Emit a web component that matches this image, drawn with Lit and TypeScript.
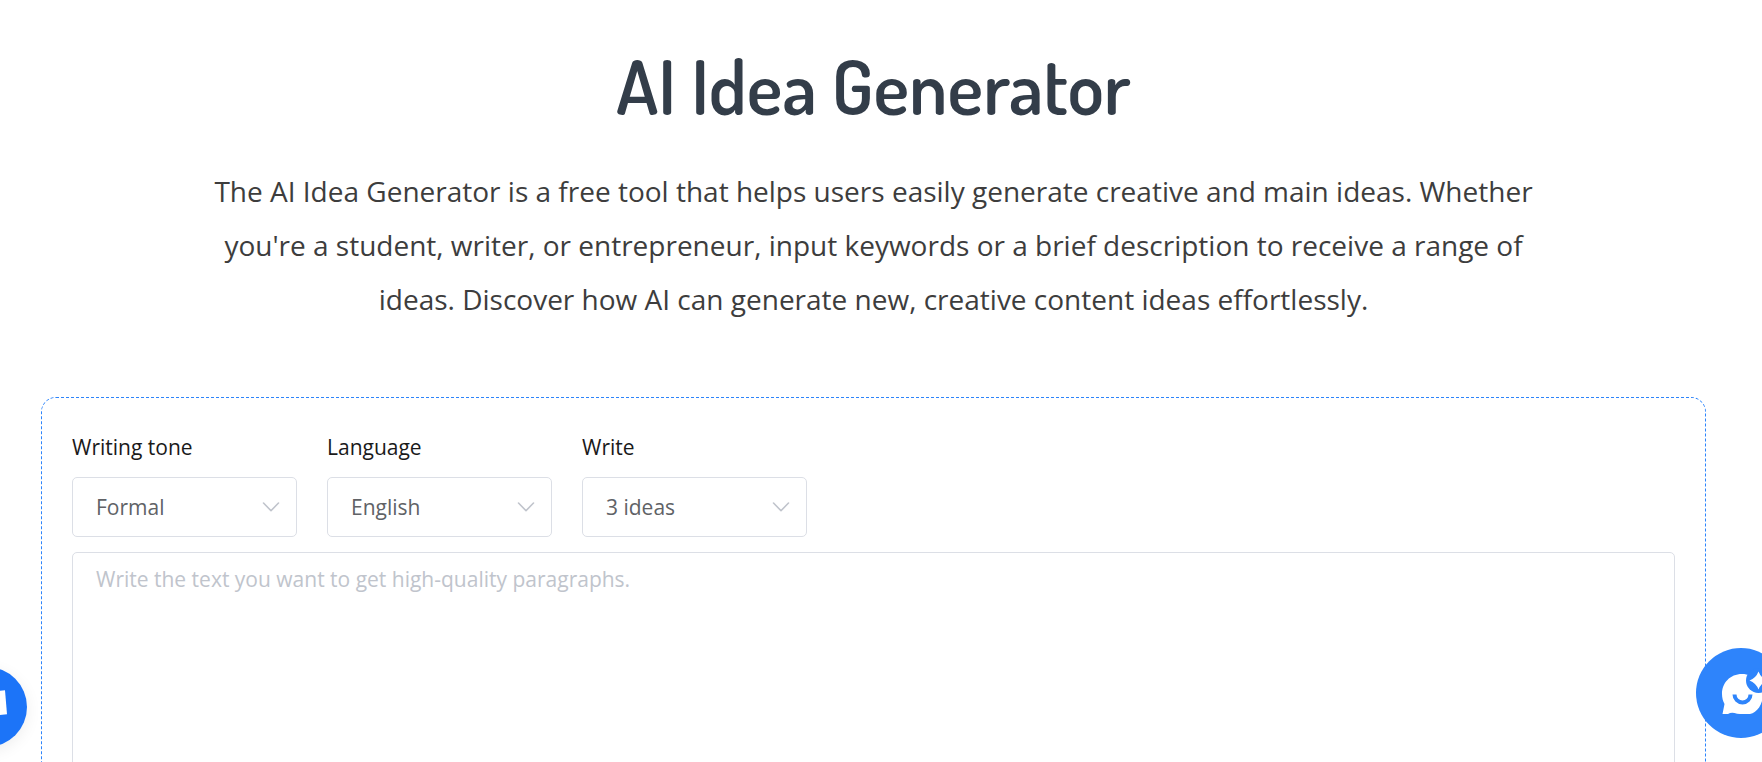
import { LitElement, html, css } from "lit";
import { customElement, property } from "lit/decorators.js";

@customElement("option-select")
class OptionSelect extends LitElement {
  @property() label = "";
  @property({ attribute: false }) options: string[] = [];

  static styles = css`
    :host {
      display: block;
      flex: 0 1 225px;
    }
    .label {
      display: block;
      margin-bottom: 14px;
      color: #1a1a1a;
      font-size: 21px;
      line-height: 32px;
    }
    .field {
      display: grid;
      align-items: center;
    }
    .select {
      grid-area: 1 / 1;
      box-sizing: border-box;
      width: 100%;
      height: 60px;
      margin: 0;
      padding: 0 48px 0 23px;
      appearance: none;
      border: 1px solid #dcdfe6;
      border-radius: 5px;
      background: #fff;
      color: #606266;
      font: inherit;
      font-size: 21px;
    }
    .chevron {
      grid-area: 1 / 1;
      justify-self: end;
      margin-right: 17px;
      pointer-events: none;
    }
  `;

  render() {
    return html`
      <label class="label" for="choice">${this.label}</label>
      <div class="field">
        <select class="select" id="choice">
          ${this.options.map((o) => html`<option>${o}</option>`)}
        </select>
        <svg class="chevron" width="18" height="10" viewBox="0 0 18 10" fill="none" stroke="#c0c4cc" stroke-width="1.6" stroke-linecap="round" stroke-linejoin="round" aria-hidden="true">
          <path d="M1.5 1 9 8.7 16.5 1" />
        </svg>
      </div>
    `;
  }
}

@customElement("app-root")
class AppRoot extends LitElement {
  static styles = css`
    :host {
      display: block;
      height: 100vh;
      overflow: hidden;
      background: #fff;
      font-family: "Open Sans", sans-serif;
    }
    .page {
      padding: 40px 56px 60px 41px;
    }
    .title {
      margin: 0;
      color: #333d49;
      font-family: Dosis, Lato, sans-serif;
      font-size: 75px;
      font-weight: 600;
      line-height: 92px;
      text-align: center;
    }
    .intro {
      max-width: 1350px;
      margin: 32px auto 71px;
      color: #3d3d3d;
      font-size: 28px;
      line-height: 54px;
      text-align: center;
    }
    .panel {
      padding: 33px 30px 30px;
      border: 1px dashed #2d84fb;
      border-radius: 15px;
    }
    .options {
      display: flex;
      gap: 30px;
      margin-bottom: 15px;
    }
    .prompt {
      display: block;
      box-sizing: border-box;
      width: 100%;
      height: 375px;
      padding: 9px 23px;
      border: 1px solid #dcdfe6;
      border-radius: 5px;
      resize: none;
      color: #606266;
      font: inherit;
      font-size: 21px;
      line-height: 34px;
    }
    .prompt::placeholder {
      color: #c0c4cc;
    }
    .bubble {
      position: fixed;
      padding: 0;
      border: 0;
      border-radius: 50%;
    }
    .bubble svg {
      display: block;
    }
    .mail {
      left: -53px;
      bottom: 15px;
      width: 80px;
      height: 80px;
      background: #1c74f8;
      box-shadow: 0 4px 16px rgba(0, 0, 0, 0.07);
    }
    .chat {
      right: -24px;
      bottom: 24px;
      width: 90px;
      height: 90px;
      background: #2e84fb;
    }
  `;

  render() {
    return html`
      <main class="page">
        <h1 class="title">AI Idea Generator</h1>
        <p class="intro">
          The AI Idea Generator is a free tool that helps users easily generate creative and main
          ideas. Whether you're a student, writer, or entrepreneur, input keywords or a brief
          description to receive a range of ideas. Discover how AI can generate new, creative
          content ideas effortlessly.
        </p>
        <form class="panel">
          <div class="options">
            <option-select label="Writing tone" .options=${["Formal"]}></option-select>
            <option-select label="Language" .options=${["English"]}></option-select>
            <option-select label="Write" .options=${["3 ideas"]}></option-select>
          </div>
          <textarea
            class="prompt"
            aria-label="Text"
            placeholder="Write the text you want to get high-quality paragraphs."
          ></textarea>
        </form>
      </main>
      <button class="bubble mail" aria-label="Subscribe">
        <svg width="80" height="80" viewBox="0 0 80 80" aria-hidden="true">
          <path fill="#fff" d="M22 27 58 23.3 60 47.3 24 51Z" />
        </svg>
      </button>
      <button class="bubble chat" aria-label="Chat">
        <svg width="90" height="90" viewBox="0 0 90 90" aria-hidden="true">
          <path fill="#fff" d="M46 26C34 26 26 35 26 46C26 50 27 53 28.5 56L26.500 66H32Q35 64 38.5 65Q41 66 44 66H54C61 65 67 56 67 46C67 35 58 26 46 26Z" />
          <path d="M38.5 46.500A8 8 0 0 0 54.500 46.500" fill="none" stroke="#2e84fb" stroke-width="4" />
          <circle cx="62.5" cy="32.500" r="12.500" fill="#2e84fb" />
          <path fill="#fff" d="M62.5 23.500Q65 30 71.500 32.500Q65 35 62.5 41.500Q60 35 53.500 32.500Q60 30 62.5 23.500Z" />
        </svg>
      </button>
    `;
  }
}
